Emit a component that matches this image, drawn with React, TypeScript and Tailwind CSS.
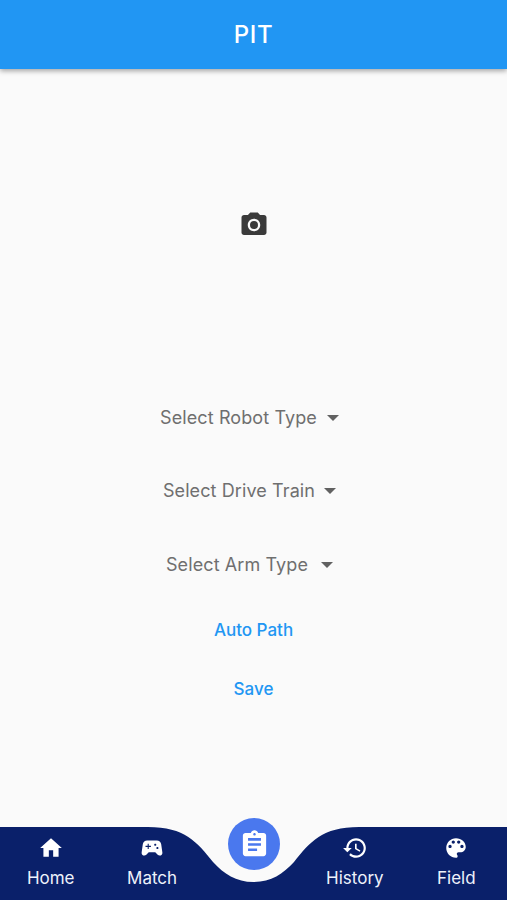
const FONT = 'font-["Inter",sans-serif]';

function Icon({ d, size = 24, className = "" }: { d: string; size?: number; className?: string }) {
  return (
    <svg width={size} height={size} viewBox="0 0 24 24" className={className} fill="currentColor" fillRule="evenodd">
      <path d={d} />
    </svg>
  );
}

const icons = {
  home: "M10 20v-6h4v6h5v-8h3L12 3 2 12h3v8z",
  game: "M21.58 16.09l-1.09-7.66C20.21 6.46 18.52 5 16.53 5H7.47C5.48 5 3.79 6.46 3.51 8.43l-1.09 7.66C2.2 17.63 3.39 19 4.94 19c.68 0 1.32-.27 1.8-.75L9 16h6l2.25 2.25c.48.48 1.13.75 1.8.75 1.56 0 2.75-1.37 2.53-2.91zM11 11H9v2H8v-2H6v-1h2V8h1v2h2v1zm4-1c-.55 0-1-.45-1-1s.45-1 1-1 1 .45 1 1-.45 1-1 1zm2 3c-.55 0-1-.45-1-1s.45-1 1-1 1 .45 1 1-.45 1-1 1z",
  history: "M13 3c-4.97 0-9 4.03-9 9H1l3.89 3.89.07.14L9 12H6c0-3.87 3.13-7 7-7s7 3.13 7 7-3.13 7-7 7c-1.93 0-3.68-.79-4.94-2.06l-1.42 1.42C8.27 19.99 10.51 21 13 21c4.97 0 9-4.03 9-9s-4.03-9-9-9zm-1 5v5l4.28 2.54.72-1.21-3.5-2.08V8H12z",
  palette: "M12 3c-4.97 0-9 4.03-9 9s4.03 9 9 9c.83 0 1.5-.67 1.5-1.5 0-.39-.15-.74-.39-1.01-.23-.26-.38-.61-.38-.99 0-.83.67-1.5 1.5-1.5H16c2.76 0 5-2.24 5-5 0-4.42-4.03-8-9-8zm-5.5 9c-.83 0-1.5-.67-1.5-1.5S5.67 9 6.5 9 8 9.67 8 10.5 7.33 12 6.5 12zm3-4C8.67 8 8 7.33 8 6.5S8.67 5 9.5 5s1.5.67 1.5 1.5S10.33 8 9.5 8zm5 0c-.83 0-1.5-.67-1.5-1.5S13.67 5 14.5 5s1.5.67 1.5 1.5S15.33 8 14.5 8zm3 4c-.83 0-1.5-.67-1.5-1.5S16.67 9 17.5 9s1.5.67 1.5 1.5-.67 1.5-1.5 1.5z",
  clipboard: "M19 3h-4.18C14.4 1.84 13.3 1 12 1c-1.3 0-2.4.84-2.82 2H5c-1.1 0-2 .9-2 2v14c0 1.1.9 2 2 2h14c1.1 0 2-.9 2-2V5c0-1.1-.9-2-2-2zm-7 0c.55 0 1 .45 1 1s-.45 1-1 1-1-.45-1-1 .45-1 1-1zm2 14H7v-2h7v2zm3-4H7v-2h10v2zm0-4H7V7h10v2z",
  camera: "M9 2L7.17 4H4c-1.1 0-2 .9-2 2v12c0 1.1.9 2 2 2h16c1.1 0 2-.9 2-2V6c0-1.1-.9-2-2-2h-3.17L15 2H9zm3 15c-2.76 0-5-2.24-5-5s2.24-5 5-5 5 2.24 5 5-2.24 5-5 5zM12 8.8a3.2 3.2 0 1 0 0 6.4 3.2 3.2 0 0 0 0-6.4z",
};

function Dropdown({ label, gap, rowClass }: { label: string; gap: string; rowClass: string }) {
  return (
    <div className={`flex items-center justify-center h-[24px] pr-[8px] ${rowClass}`}>
      <span className="text-[18px] leading-[24px] tracking-[0.1px] text-[#6f6f6f]">{label}</span>
      <span className={`${gap} w-0 h-0 border-x-[6px] border-x-transparent border-t-[6px] border-t-[#616161]`} />
    </div>
  );
}

function NavItem({ icon, label }: { icon: string; label: string }) {
  return (
    <div className="flex flex-col items-center text-[#eef2fb]">
      <Icon d={icon} size={26} className="text-white" />
      <span className="mt-[7px] text-[17px] leading-[20px]">{label}</span>
    </div>
  );
}

export default function App() {
  return (
    <div className={`relative flex flex-col w-[507px] h-[900px] overflow-hidden bg-[#fafafa] ${FONT}`}>
      <header className="relative z-10 h-[69px] shrink-0 flex items-center justify-center bg-[#2196f3] shadow-[0_2px_5px_rgba(0,0,0,0.35)]">
        <h1 className="text-[24px] font-medium tracking-[0.6px] text-white">PIT</h1>
      </header>

      <main className="flex-1 flex flex-col items-center">
        <Icon d={icons.camera} size={30} className="mt-[141px] text-[#3a3a3a]" />
        <Dropdown label="Select Robot Type" gap="ml-[10px]" rowClass="mt-[166px]" />
        <Dropdown label="Select Drive Train" gap="ml-[9px]" rowClass="mt-[49px]" />
        <Dropdown label="Select Arm Type" gap="ml-[13px]" rowClass="mt-[50px]" />
        <span className="mt-[43px] text-[17px] leading-[20px] font-medium text-[#2196f3]">Auto Path</span>
        <span className="mt-[39px] text-[17px] leading-[20px] font-medium text-[#2196f3]">Save</span>
      </main>

      <nav className="relative h-[73px] shrink-0 bg-[#0a206a]">
        <svg className="absolute left-0 top-0" width="507" height="73" viewBox="0 0 507 73" aria-hidden="true">
          <path d="M148 0C185 0 197 15 213 35C224 47 236 55 253.500 55C271 55 283 47 294 35C310 15 322 0 359 0Z" fill="#fafafa" />
        </svg>
        <div className="relative grid grid-cols-5 pt-[8px]">
          <NavItem icon={icons.home} label="Home" />
          <NavItem icon={icons.game} label="Match" />
          <div />
          <NavItem icon={icons.history} label="History" />
          <NavItem icon={icons.palette} label="Field" />
        </div>
        <div className="absolute left-[228px] top-[-9px] w-[52px] h-[52px] rounded-full bg-[#4a78ee] flex items-center justify-center text-white">
          <Icon d={icons.clipboard} size={31} />
        </div>
      </nav>
    </div>
  );
}
